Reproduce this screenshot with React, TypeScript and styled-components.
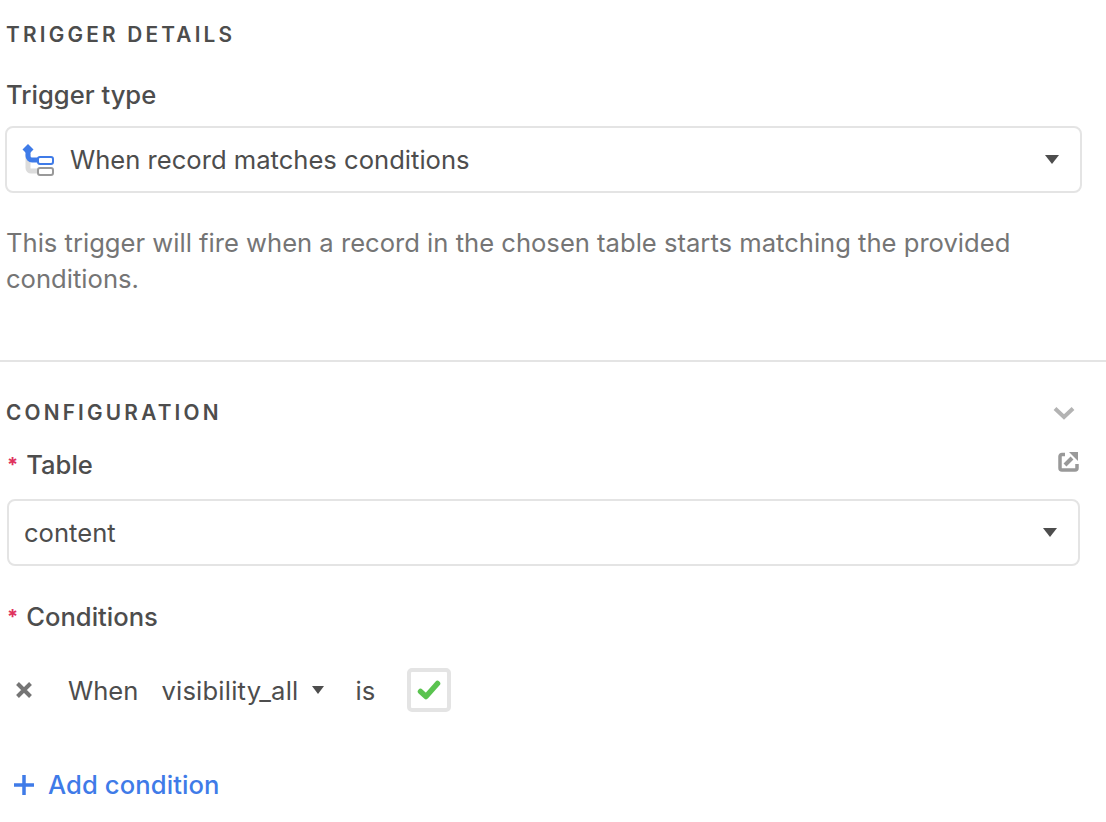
import { FC, ReactNode } from 'react';
import styled, { createGlobalStyle } from 'styled-components';

const GlobalStyle = createGlobalStyle`
    html, body {
        margin: 0;
        padding: 0;
        background: #fff;
    }
    body {
        font-family: Inter, "Liberation Sans", sans-serif;
        color: #4d4d4d;
    }
`;

const Page = styled.div`
    width: 1106px;
    height: 822px;
    overflow: hidden;
    display: flex;
    flex-direction: column;
`;

const TriggerSection = styled.section`
    display: flex;
    flex-direction: column;
    height: 362px;
    padding: 22px 24px 0 5px;
    box-sizing: border-box;
    border-bottom: 2px solid #e4e4e4;
`;

const ConfigSection = styled.section`
    display: flex;
    flex-direction: column;
    padding: 38px 26px 0 7px;
`;

const SectionTitle = styled.h2<{ $shift?: number }>`
    margin: 0 0 0 ${p => p.$shift ?? 0}px;
    font-size: 20.8px;
    line-height: 26px;
    font-weight: 600;
    letter-spacing: 3.2px;
    text-transform: uppercase;
    color: #4d4d4d;
`;

const SectionHeader = styled.div`
    display: flex;
    align-items: center;
    justify-content: space-between;
    padding-right: 5px;
`;

const FieldLabel = styled.div<{ $top: number; $indent?: number }>`
    display: flex;
    align-items: center;
    justify-content: space-between;
    margin: ${p => p.$top}px 0 0 ${p => p.$indent ?? 0}px;
    font-size: 25.6px;
    line-height: 32px;
    font-weight: 500;
    color: #4d4d4d;
`;

const LabelText = styled.span`
    display: flex;
    align-items: center;
    gap: 8px;
`;

const Required = styled.span`
    color: #e0325e;
    font-size: 20px;
    font-weight: 700;
    line-height: 32px;
`;

const LabelAction = styled.span`
    display: flex;
    margin: 0 1px 7px 0;
`;

const SelectBox = styled.div<{ $top: number }>`
    display: flex;
    align-items: center;
    height: 67px;
    box-sizing: border-box;
    margin-top: ${p => p.$top}px;
    padding: 0 21px 0 15px;
    border: 2px solid #e4e4e4;
    border-radius: 8px;
    font-size: 25.6px;
    color: #4d4d4d;
    gap: 14px;
`;

const SelectValue = styled.span`
    flex: 1;
`;

const Caret = styled.span<{ $size?: number }>`
    width: 0;
    height: 0;
    border-left: ${p => p.$size ?? 7}px solid transparent;
    border-right: ${p => p.$size ?? 7}px solid transparent;
    border-top: ${p => (p.$size ?? 7) + 2}px solid #4d4d4d;
`;

const HelpText = styled.p`
    margin: 32px 0 0 1px;
    font-size: 25.6px;
    line-height: 36px;
    color: #757575;
`;

const ConditionRow = styled.div`
    display: flex;
    align-items: center;
    height: 44px;
    margin-top: 35px;
    padding-left: 8px;
    font-size: 25.6px;
    color: #4d4d4d;
`;

const RowField = styled.span<{ $gap: number }>`
    display: flex;
    align-items: center;
    gap: 14px;
    margin-left: ${p => p.$gap}px;
`;

const FieldName = styled.span`
    letter-spacing: 0.2px;
`;

const CheckCell = styled.span`
    display: flex;
    align-items: center;
    justify-content: center;
    width: 44px;
    height: 44px;
    box-sizing: border-box;
    margin-left: 32px;
    border: 4px solid #e4e4e4;
    border-radius: 5px;
`;

const AddCondition = styled.div`
    display: flex;
    align-items: center;
    gap: 14px;
    margin-top: 55px;
    padding-left: 7px;
    font-size: 25.6px;
    line-height: 36px;
    font-weight: 500;
    letter-spacing: 0.1px;
    color: #3f7be8;
`;

const TriggerIcon: FC = () => (
    <svg width="34" height="34" viewBox="0 0 34 34" fill="none">
        <path d="M6 11v14a3 3 0 0 0 3 3h7" stroke="#dcdcdc" strokeWidth="5" />
        <path d="M6 8v5a4 4 0 0 0 4 4h7" stroke="#3f7be8" strokeWidth="5" />
        <path d="M6 1l5.500 5.500L6 12 .5 6.500z" fill="#3f7be8" />
        <rect x="16" y="14" width="15" height="7" rx="2" fill="#fff" stroke="#3f7be8" strokeWidth="2" />
        <rect x="16" y="25" width="15" height="7" rx="2" fill="#fff" stroke="#999" strokeWidth="2" />
    </svg>
);

const ChevronIcon: FC = () => (
    <svg width="22" height="14" viewBox="0 0 22 14" fill="none">
        <path d="M2 2.500L11 11l9-8.500" stroke="#b3b3b3" strokeWidth="4" />
    </svg>
);

const ExternalIcon: FC = () => (
    <svg width="21" height="21" viewBox="0 0 21 21" fill="none">
        <path d="M7 3.500H4a2 2 0 0 0-2 2V17a2 2 0 0 0 2 2h13a2 2 0 0 0 2-2v-4" stroke="#999" strokeWidth="3.500" />
        <path d="M7 14l7-7" stroke="#999" strokeWidth="4" />
        <path d="M11 1h9v9z" fill="#999" />
    </svg>
);

const CrossIcon: FC = () => (
    <svg width="18" height="18" viewBox="0 0 18 18" fill="none">
        <path d="M2.500 2.500l13 13M15.500 2.500l-13 13" stroke="#757575" strokeWidth="4" />
    </svg>
);

const CheckIcon: FC = () => (
    <svg width="24" height="20" viewBox="0 0 24 20" fill="none">
        <path d="M3.500 11.500l5.500 5L20.500 3.500" stroke="#5ac34f" strokeWidth="5.500" strokeLinecap="round" strokeLinejoin="round" />
    </svg>
);

const PlusIcon: FC = () => (
    <svg width="20" height="20" viewBox="0 0 20 20" fill="none">
        <path d="M10 0v20M0 10h20" stroke="#3f7be8" strokeWidth="3.500" />
    </svg>
);

const Select: FC<{ icon?: ReactNode; value: string; top: number }> = ({ icon, value, top }) => (
    <SelectBox $top={top}>
        {icon}
        <SelectValue>{value}</SelectValue>
        <Caret />
    </SelectBox>
);

export default function App() {
    return (
        <Page>
            <GlobalStyle />
            <TriggerSection>
                <SectionTitle $shift={1}>Trigger details</SectionTitle>
                <FieldLabel $top={31} $indent={1}>Trigger type</FieldLabel>
                <Select top={15} icon={<TriggerIcon />} value="When record matches conditions" />
                <HelpText>This trigger will fire when a record in the chosen table starts matching the provided conditions.</HelpText>
            </TriggerSection>
            <ConfigSection>
                <SectionHeader>
                    <SectionTitle $shift={-1}>Configuration</SectionTitle>
                    <ChevronIcon />
                </SectionHeader>
                <FieldLabel $top={23}>
                    <LabelText><Required>*</Required>Table</LabelText>
                    <LabelAction><ExternalIcon /></LabelAction>
                </FieldLabel>
                <Select top={18} value="content" />
                <FieldLabel $top={35}>
                    <LabelText><Required>*</Required>Conditions</LabelText>
                </FieldLabel>
                <ConditionRow>
                    <CrossIcon />
                    <RowField $gap={35}>When</RowField>
                    <RowField $gap={23}><FieldName>visibility_all</FieldName><Caret $size={6} /></RowField>
                    <RowField $gap={31}>is</RowField>
                    <CheckCell><CheckIcon /></CheckCell>
                </ConditionRow>
                <AddCondition>
                    <PlusIcon />
                    Add condition
                </AddCondition>
            </ConfigSection>
        </Page>
    );
}
